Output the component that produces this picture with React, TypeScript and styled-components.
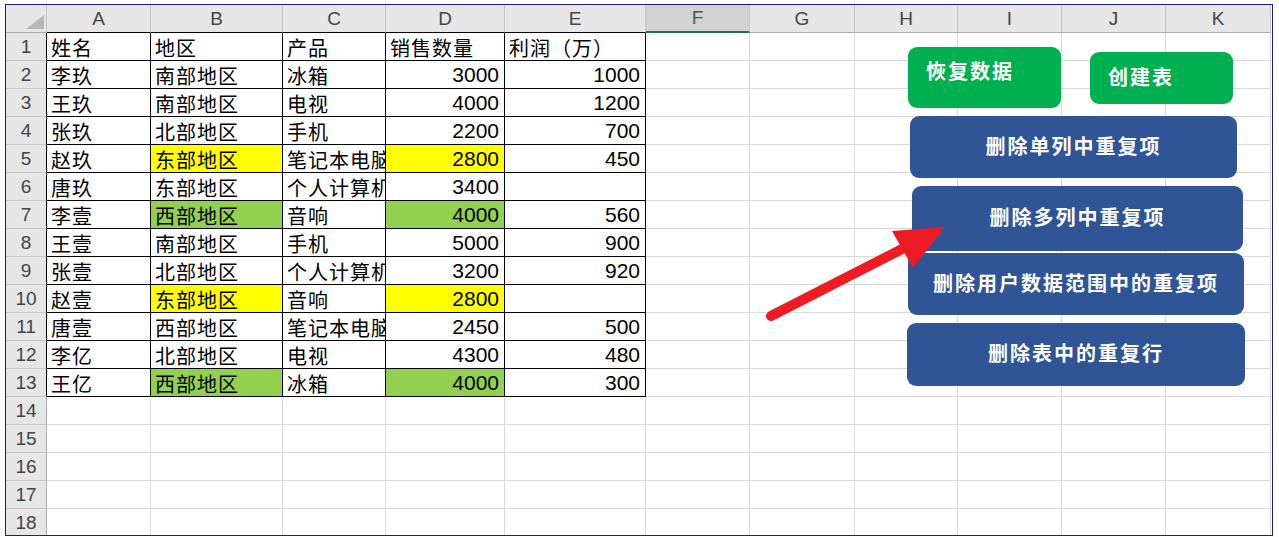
import React from "react";
import styled, { createGlobalStyle, css } from "styled-components";

const GlobalStyle = createGlobalStyle`
  html, body {
    margin: 0;
    padding: 0;
    background: #ffffff;
  }
  body {
    font-family: "Liberation Sans", "Noto Sans CJK SC", sans-serif;
  }
`;

const COLS = ["A", "B", "C", "D", "E", "F", "G", "H", "I", "J", "K"];
const WIDTHS = [104, 132, 103, 119, 141, 104, 105, 103, 104, 104, 105];
const ROW_COUNT = 18;
const TABLE_ROWS = 13;
const TABLE_COLS = 5;

type Fill = "yellow" | "green" | undefined;

type Row = {
  name: string;
  region: string;
  product: string;
  qty: string;
  profit: string;
  fill?: Fill;
};

const DATA: Row[] = [
  { name: "李玖", region: "南部地区", product: "冰箱", qty: "3000", profit: "1000" },
  { name: "王玖", region: "南部地区", product: "电视", qty: "4000", profit: "1200" },
  { name: "张玖", region: "北部地区", product: "手机", qty: "2200", profit: "700" },
  { name: "赵玖", region: "东部地区", product: "笔记本电脑", qty: "2800", profit: "450", fill: "yellow" },
  { name: "唐玖", region: "东部地区", product: "个人计算机", qty: "3400", profit: "" },
  { name: "李壹", region: "西部地区", product: "音响", qty: "4000", profit: "560", fill: "green" },
  { name: "王壹", region: "南部地区", product: "手机", qty: "5000", profit: "900" },
  { name: "张壹", region: "北部地区", product: "个人计算机", qty: "3200", profit: "920" },
  { name: "赵壹", region: "东部地区", product: "音响", qty: "2800", profit: "", fill: "yellow" },
  { name: "唐壹", region: "西部地区", product: "笔记本电脑", qty: "2450", profit: "500" },
  { name: "李亿", region: "北部地区", product: "电视", qty: "4300", profit: "480" },
  { name: "王亿", region: "西部地区", product: "冰箱", qty: "4000", profit: "300", fill: "green" },
];

const FILLS: Record<string, string> = {
  yellow: "#ffff00",
  green: "#92d050",
};

const Frame = styled.div`
  margin: 4px 0 0 5px;
  width: 1268px;
  height: 532px;
  box-sizing: border-box;
  border: 1px solid #1c1c8e;
  overflow: hidden;
`;

const Sheet = styled.div`
  position: relative;
  display: grid;
  grid-template-columns: 41px ${WIDTHS.map((w) => `${w}px`).join(" ")};
  grid-auto-rows: 28px;
`;

const Corner = styled.div`
  background: #e6e6e6;
  border-right: 1px solid #c6c6c6;
  border-bottom: 1px solid #ababab;
  position: relative;
  box-sizing: border-box;

  &::after {
    content: "";
    position: absolute;
    left: 20px;
    top: 10px;
    width: 18px;
    height: 14px;
    background: #b7b7b7;
    clip-path: polygon(100% 0, 100% 100%, 0 100%);
  }
`;

const ColHeader = styled.div<{ $selected?: boolean; $table?: boolean }>`
  box-sizing: border-box;
  display: flex;
  align-items: center;
  justify-content: center;
  font-family: "Liberation Sans", sans-serif;
  font-size: 19px;
  color: #444444;
  background: #e6e6e6;
  border-right: 1px solid #c6c6c6;
  border-bottom: 1px solid ${({ $table }) => ($table ? "#000000" : "#ababab")};
  ${({ $selected }) =>
    $selected &&
    css`
      background: #d2d2d2;
      color: #3d5c48;
      border-bottom: 2px solid #217346;
    `}
`;

const RowHeader = styled.div<{ $table?: boolean }>`
  box-sizing: border-box;
  display: flex;
  align-items: center;
  justify-content: center;
  font-family: "Liberation Sans", sans-serif;
  font-size: 19px;
  color: #444444;
  background: #e6e6e6;
  border-bottom: 1px solid #c6c6c6;
  border-right: 1px solid ${({ $table }) => ($table ? "#000000" : "#ababab")};
`;

const Cell = styled.div<{ $fill?: Fill; $num?: boolean; $table?: boolean }>`
  box-sizing: border-box;
  display: flex;
  align-items: center;
  overflow: hidden;
  white-space: nowrap;
  padding: 1px 5px 0 4px;
  color: #000000;
  background: ${({ $fill }) => ($fill ? FILLS[$fill] : "#ffffff")};
  border-right: 1px solid ${({ $table }) => ($table ? "#000000" : "#d9d9d9")};
  border-bottom: 1px solid ${({ $table }) => ($table ? "#000000" : "#d9d9d9")};
  ${({ $num }) =>
    $num
      ? css`
          justify-content: flex-end;
          font-family: "Liberation Sans", sans-serif;
          font-size: 21px;
        `
      : css`
          justify-content: flex-start;
          font-family: "Noto Sans CJK SC", sans-serif;
          font-size: 20px;
          letter-spacing: 1px;
        `}
`;

const ShapeButton = styled.div<{
  $tone: "green" | "blue";
  $topAlign?: boolean;
  $left?: boolean;
}>`
  position: absolute;
  box-sizing: border-box;
  display: flex;
  align-items: ${({ $topAlign }) => ($topAlign ? "flex-start" : "center")};
  justify-content: ${({ $left }) => ($left ? "flex-start" : "center")};
  padding: ${({ $topAlign, $left }) =>
    $topAlign ? "9px 0 0 18px" : $left ? "0 0 4px 18px" : "0 0 4px 0"};
  border-radius: 9px;
  background: ${({ $tone }) => ($tone === "green" ? "#00b050" : "#2f5597")};
  color: #ffffff;
  font-family: "Noto Sans CJK SC", sans-serif;
  font-weight: 700;
  font-size: 20px;
  letter-spacing: 2px;
  white-space: nowrap;
`;

const ArrowLayer = styled.svg`
  position: absolute;
  left: 0;
  top: 0;
  pointer-events: none;
`;

type Shape = {
  label: string;
  tone: "green" | "blue";
  box: [number, number, number, number];
  topAlign?: boolean;
  left?: boolean;
};

const SHAPES: Shape[] = [
  { label: "恢复数据", tone: "green", box: [902, 42, 153, 61], topAlign: true, left: true },
  { label: "创建表", tone: "green", box: [1084, 47, 143, 52], left: true },
  { label: "删除单列中重复项", tone: "blue", box: [904, 111, 327, 62] },
  { label: "删除多列中重复项", tone: "blue", box: [906, 181, 331, 65] },
  { label: "删除用户数据范围中的重复项", tone: "blue", box: [902, 248, 336, 62] },
  { label: "删除表中的重复行", tone: "blue", box: [901, 318, 338, 63] },
];

const rowCells = (r: number): { text: string; num?: boolean; fill?: Fill }[] => {
  if (r === 1) {
    return [
      { text: "姓名" },
      { text: "地区" },
      { text: "产品" },
      { text: "销售数量" },
      { text: "利润（万）" },
    ];
  }
  const d = DATA[r - 2];
  if (!d) return [];
  return [
    { text: d.name },
    { text: d.region, fill: d.fill },
    { text: d.product },
    { text: d.qty, num: true, fill: d.fill },
    { text: d.profit, num: true },
  ];
};

export default function App() {
  const rows = Array.from({ length: ROW_COUNT }, (_, i) => i + 1);
  return (
    <>
      <GlobalStyle />
      <Frame>
        <Sheet>
          <Corner />
          {COLS.map((c, i) => (
            <ColHeader key={c} $selected={c === "F"} $table={i < TABLE_COLS}>
              {c}
            </ColHeader>
          ))}
          {rows.map((r) => {
            const inTable = r <= TABLE_ROWS;
            const cells = inTable ? rowCells(r) : [];
            return (
              <React.Fragment key={r}>
                <RowHeader $table={inTable}>{r}</RowHeader>
                {COLS.map((c, i) => {
                  const cell = i < TABLE_COLS ? cells[i] : undefined;
                  return (
                    <Cell
                      key={c}
                      $table={inTable && i < TABLE_COLS}
                      $num={cell?.num}
                      $fill={cell?.fill}
                    >
                      {cell?.text}
                    </Cell>
                  );
                })}
              </React.Fragment>
            );
          })}

          {SHAPES.map((s) => (
            <ShapeButton
              key={s.label}
              $tone={s.tone}
              $topAlign={s.topAlign}
              $left={s.left}
              style={{ left: s.box[0], top: s.box[1], width: s.box[2], height: s.box[3] }}
            >
              {s.label}
            </ShapeButton>
          ))}

          <ArrowLayer width={1266} height={530} viewBox="0 0 1266 530">
            <line
              x1={765}
              y1={311}
              x2={900}
              y2={242}
              stroke="#ed1c24"
              strokeWidth={10}
              strokeLinecap="round"
            />
            <polygon points="939,222 886,226 907,263" fill="#ed1c24" />
          </ArrowLayer>
        </Sheet>
      </Frame>
    </>
  );
}
